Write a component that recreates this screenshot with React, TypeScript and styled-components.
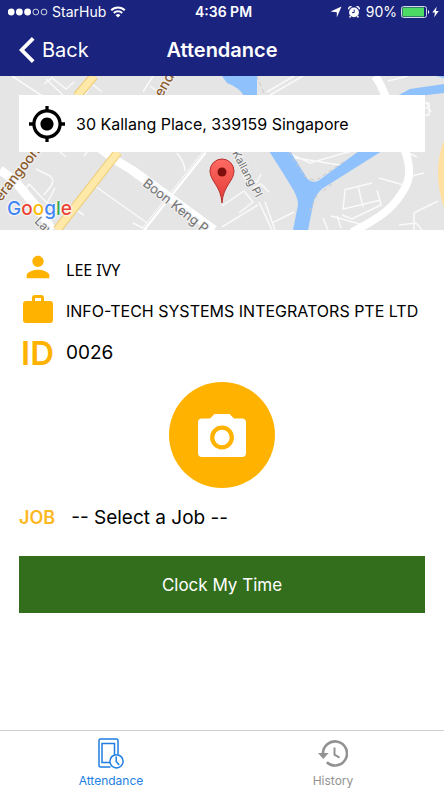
import React from "react";
import styled, { createGlobalStyle } from "styled-components";

const NAVY = "#1a237e";
const AMBER = "#ffb300";
const BLUE = "#1e7fe0";
const GREY = "#929292";

const GlobalStyle = createGlobalStyle`
  *, *::before, *::after { box-sizing: border-box; }
  body {
    margin: 0;
    background: #fff;
    color: #000;
    font-family: Inter, "Liberation Sans", sans-serif;
  }
  button, select { font-family: inherit; }
  svg { display: block; flex: none; }
`;

const Screen = styled.div`
  display: flex;
  flex-direction: column;
  min-height: 100vh;
`;

const TopBar = styled.header`
  background: ${NAVY};
  color: #fff;
`;

const StatusBar = styled.div`
  display: grid;
  grid-template-columns: 1fr auto 1fr;
  align-items: center;
  height: 24px;
  padding: 0 5px 0 8px;
  font-size: 14px;
  line-height: 16px;
`;

const StatusGroup = styled.div<{ $end?: boolean }>`
  display: flex;
  align-items: center;
  justify-content: ${(p) => (p.$end ? "flex-end" : "flex-start")};
  gap: 4px;
`;

const StatusIcons = styled.span`
  display: flex;
  gap: 6px;
  margin-right: 2px;
`;

const PowerIcons = styled.span`
  display: flex;
  gap: 2px;
`;

const Time = styled.span`
  font-weight: 600;
`;

const NavRow = styled.div`
  display: grid;
  grid-template-columns: 1fr auto 1fr;
  align-items: center;
  height: 52px;
  padding: 0 19px;
`;

const BackButton = styled.button`
  display: flex;
  align-items: center;
  justify-self: start;
  gap: 7px;
  padding: 0;
  border: 0;
  background: none;
  color: #fff;
  font-size: 20px;
  line-height: 26px;
`;

const Title = styled.h1`
  margin: 0;
  font-size: 20px;
  line-height: 26px;
  font-weight: 600;
`;

const MapPanel = styled.section`
  position: relative;
  height: 154px;
  padding: 19px;
  overflow: hidden;
  background: #e5e5e5;
`;

const MapArt = styled.svg`
  position: absolute;
  inset: 0;
  width: 100%;
  height: 100%;
`;

const AddressCard = styled.div`
  position: relative;
  display: flex;
  align-items: center;
  gap: 11px;
  height: 57px;
  padding: 0 10px;
  background: #fff;
  font-size: 16px;
  line-height: 20px;
`;

const MapLogo = styled.div`
  position: absolute;
  left: 7px;
  bottom: 7px;
  font-size: 19px;
  line-height: 28px;
  font-weight: 500;
  text-shadow: 0 0 2px #fff, 0 0 2px #fff, 0 0 3px #fff;
`;

const Letter = styled.span<{ $color: string }>`
  color: ${(p) => p.$color};
`;

const Main = styled.main`
  flex: 1;
  display: flex;
  flex-direction: column;
  padding: 18px 19px;
`;

const Row = styled.div`
  display: flex;
  align-items: center;
  gap: 10px;
  height: 42px;
`;

const IconSlot = styled.div`
  display: flex;
  justify-content: center;
  width: 37px;
  padding-bottom: 4px;
  color: ${AMBER};
`;

const IdMark = styled.span`
  padding-top: 4px;
  font-size: 33px;
  line-height: 40px;
  font-weight: 600;
`;

const NameText = styled.span`
  padding-top: 2px;
  font-family: "Noto Sans", "Open Sans", sans-serif;
  font-size: 16px;
  line-height: 20px;
`;

const CompanyText = styled.span`
  font-size: 16px;
  line-height: 20px;
  white-space: nowrap;
`;

const IdText = styled.span`
  font-size: 19px;
  line-height: 26px;
`;

const CameraButton = styled.button`
  display: flex;
  align-items: center;
  justify-content: center;
  align-self: center;
  width: 106px;
  height: 106px;
  margin: 8px 0;
  padding: 0;
  border: 0;
  border-radius: 50%;
  background: ${AMBER};
  color: #fff;
`;

const JobRow = styled.label`
  display: flex;
  align-items: center;
  gap: 16px;
  height: 44px;
`;

const JobMark = styled.span`
  color: #fcb823;
  font-size: 18px;
  line-height: 26px;
  font-weight: 600;
`;

const JobSelect = styled.select`
  flex: 1;
  appearance: none;
  padding: 0;
  border: 0;
  background: none;
  color: #000;
  font-size: 19px;
  line-height: 26px;
`;

const ClockButton = styled.button`
  height: 57px;
  margin-top: 16px;
  border: 0;
  background: #336e1d;
  color: #fff;
  font-size: 17px;
  line-height: 22px;
`;

const TabBar = styled.nav`
  display: grid;
  grid-template-columns: 1fr 1fr;
  height: 59px;
  border-top: 1px solid #cfcfcf;
  background: #fff;
`;

const Tab = styled.a<{ $active?: boolean }>`
  display: flex;
  flex-direction: column;
  align-items: center;
  gap: 4px;
  padding-top: 7px;
  color: ${(p) => (p.$active ? BLUE : GREY)};
  font-size: 12px;
  line-height: 16px;
  text-decoration: none;
`;

const SignalDots = () => (
  <svg width="40" height="10" viewBox="0 0 40 10" fill="#fff" aria-hidden="true">
    <circle cx="3.2" cy="5" r="3.4" />
    <circle cx="11.4" cy="5" r="3.4" />
    <circle cx="19.6" cy="5" r="3.4" />
    <circle cx="27.8" cy="5" r="2.9" fill="none" stroke="#fff" strokeWidth=".8" />
    <circle cx="36" cy="5" r="2.9" fill="none" stroke="#fff" strokeWidth=".8" />
  </svg>
);

const WifiIcon = () => (
  <svg width="16" height="12" viewBox="0 0 16 12" fill="none" stroke="#fff" strokeWidth="2" aria-hidden="true">
    <path d="M1.2 4.2a9.6 9.6 0 0 1 13.6 0M3.8 7a6 6 0 0 1 8.4 0" />
    <path d="M8 11.6 5.6 9.2a3.4 3.4 0 0 1 4.8 0z" fill="#fff" stroke="none" />
  </svg>
);

const LocationIcon = () => (
  <svg width="12" height="12" viewBox="0 0 12 12" fill="#fff" aria-hidden="true">
    <path d="M11.5.5 6.8 11.5V6.2L.5 5.6z" />
  </svg>
);

const AlarmIcon = () => (
  <svg width="12" height="12" viewBox="0 0 12 12" aria-hidden="true">
    <path d="M.5 3.4A3 3 0 0 1 3.6.6M11.5 3.4A3 3 0 0 0 8.4.6M2.6 10l-1 1.5M9.4 10l1 1.5" stroke="#fff" strokeWidth="1.4" fill="none" />
    <circle cx="6" cy="6.4" r="4.9" fill="#fff" />
    <path d="M6.2 3.6v3H4" stroke={NAVY} strokeWidth="1" fill="none" />
  </svg>
);

const BatteryIcon = () => (
  <svg width="29" height="12" viewBox="0 0 29 12" aria-hidden="true">
    <rect x=".5" y=".5" width="25" height="11" rx="2" fill="none" stroke="#d6d8ea" />
    <path d="M1.5 1.5H23v9H1.5z" fill="#4cd964" />
    <path d="M27 4c1.6.5 1.6 3.5 0 4z" fill="#fff" />
  </svg>
);

const BoltIcon = () => (
  <svg width="7" height="12" viewBox="0 0 7 12" fill="#fff" aria-hidden="true">
    <path d="M4.6.8.3 6.6h2.6L2.2 11.2 6.8 5H4z" />
  </svg>
);

const ChevronIcon = () => (
  <svg width="16" height="26" viewBox="0 0 16 26" fill="none" stroke="#fff" strokeWidth="3.8" aria-hidden="true">
    <path d="M14.2 1.4 2.6 13l11.6 11.6" />
  </svg>
);

const TargetIcon = () => (
  <svg width="36" height="36" viewBox="1 1 22 22" aria-hidden="true">
    <path d="M12 8c-2.21 0-4 1.79-4 4s1.79 4 4 4 4-1.79 4-4-1.79-4-4-4zm8.94 3A8.994 8.994 0 0 0 13 3.06V1h-2v2.06A8.994 8.994 0 0 0 3.06 11H1v2h2.06A8.994 8.994 0 0 0 11 20.94V23h2v-2.06A8.994 8.994 0 0 0 20.94 13H23v-2h-2.06zM12 19c-3.87 0-7-3.13-7-7s3.13-7 7-7 7 3.13 7 7-3.13 7-7 7z" />
  </svg>
);

const PersonIcon = () => (
  <svg width="34" height="34" viewBox="0 0 24 24" fill="currentColor" aria-hidden="true">
    <path d="M12 12c2.21 0 4-1.79 4-4s-1.79-4-4-4-4 1.79-4 4 1.79 4 4 4zm0 2c-2.67 0-8 1.34-8 4v2h16v-2c0-2.66-5.33-4-8-4z" />
  </svg>
);

const BriefcaseIcon = () => (
  <svg width="30" height="28" viewBox="0 0 30 28" aria-hidden="true">
    <path fill="currentColor" fillRule="evenodd" d="M12 0h6a3 3 0 0 1 3 3v3h6a3 3 0 0 1 3 3v16a3 3 0 0 1-3 3H3a3 3 0 0 1-3-3V9a3 3 0 0 1 3-3h6V3a3 3 0 0 1 3-3zm0 3v3h6V3z" />
  </svg>
);

const CameraIcon = () => (
  <svg width="48" height="43" viewBox="0 0 48 43" aria-hidden="true">
    <path fill="currentColor" d="M16.5 0h15l4.5 4.6h8a4 4 0 0 1 4 4V39a4 4 0 0 1-4 4H4a4 4 0 0 1-4-4V8.600a4 4 0 0 1 4-4h8z" />
    <circle cx="24" cy="23.5" r="9.8" fill="none" stroke={AMBER} strokeWidth="4.200" />
  </svg>
);

const AttendanceIcon = () => (
  <svg width="26" height="31" viewBox="0 0 26 31" fill="none" stroke="currentColor" strokeWidth="1.500" aria-hidden="true">
    <path d="M12.500 29H2.500a1.500 1.500 0 0 1-1.500-1.500V2.500A1.500 1.500 0 0 1 2.500 1h16A1.500 1.500 0 0 1 20 2.500v14" />
    <path d="M12.500 24.500H4V5.500h12.500v11.200" />
    <circle cx="18.500" cy="23.300" r="6.600" fill="#fff" />
    <path d="M18.200 18.500v5l3 3.500" />
  </svg>
);

const HistoryIcon = () => (
  <svg width="30" height="31" viewBox="0 0 30 31" fill="none" stroke="currentColor" aria-hidden="true">
    <path d="M5 16a12 12 0 1 1 3.800 8.200" strokeWidth="2.600" />
    <path d="M0 15h10.600l-5.300 6z" fill="currentColor" stroke="none" />
    <path d="M16.500 9.500v7.200l5 3" strokeWidth="2" />
  </svg>
);

const CityMap = () => (
  <MapArt viewBox="0 0 444 154" preserveAspectRatio="xMidYMid slice" role="img" aria-label="Map of Kallang Place">
    <defs>
      <linearGradient id="pin" x1="0" y1="0" x2="0" y2="1">
        <stop offset="0" stopColor="#ff6b63" />
        <stop offset="1" stopColor="#e03a34" />
      </linearGradient>
    </defs>
    <rect width="444" height="154" fill="#e5e5e5" />
    <g fill="none" stroke="#fafafa" strokeWidth="1.500">
      <path d="M12 0l32 21M44 8l8-6 14 11 8-7M82 23l10-15 10 8M143 16l10-16M150 10l14 10M46 3l18 17" />
      <path d="M29 108l18 19 8-15M36 93l14 7q5 4 1 10l-7 9M60 76l6 5M90 72l-6 8M29 108l-4 6" />
      <path d="M95 110l52 37M76 134l8 5M177 77q8 10 8 18M133 147l14 7" />
      <path d="M267 16l27-16M270 19l33-19M388 5l20-5M381 19l27 5" />
      <path d="M288 77l22 10 45-13M290 81l56 9M222 130l22-15 9 11-14 11M243 101l14 5 4-8M253 112l8-4 8 8" />
      <path d="M259 126l13 28M265 126l10 28M222 151l36-22M272 147l22-11" />
      <path d="M344 114l28-7M345 115l-2 18 38-9M358 110l5 21M377 114l4 15-29 14-10-4M331 140l36 10M323 142l5 12M379 102l28 8M337 140l4 12" />
      <path d="M414 154v-17l24-12M399 149l17-2 6 7M411 54h12M421 27h8v12h-10M426 26l5 10M420 32h9M412 100l12-3M404 75l13 6" />
    </g>
    <g fill="none" strokeLinejoin="round">
      <path d="M205 76l-62 78" stroke="#fff" strokeWidth="4" />
      <path d="M204 76l-62 78" stroke="#dedede" strokeWidth="1" />
      <path d="M97 70l20 15 15 9 82 60" stroke="#fff" strokeWidth="9" />
      <path d="M0 94l14 10 25 30 13 20" stroke="#fff" strokeWidth="9" />
      <path d="M375 0q10 13 16 40c5 18 26 47 15 70-11 21-24 31-54 46" stroke="#fff" strokeWidth="8" />
      <path d="M94 0L77 20M118 76L57 154" stroke="#eecb73" strokeWidth="9" />
      <path d="M94 0L77 20M118 76L57 154" stroke="#ffe9a8" strokeWidth="7" />
      <path d="M448 65q-12 30 0 66" stroke="#ffe0a0" strokeWidth="8" />
    </g>
    <g fill="#8fc1fc">
      <path d="M222 0h35v20h-13q-4-8-17-13z" />
      <path d="M397 20l13-7 34-5v9l-17 2-10 2zM436 0h8v2z" />
      <path d="M269 75h21l15 24q4 9 13 6l41-30h23l-54 34q-10 5-14 15l-6 30h-15l5-25q0-6-4-14l-11-18z" />
    </g>
    <path d="M257 0l8 20M289 76l15 24q6 5 14 3l27-18M317 119l-9 20M332 108l-10 8" fill="none" stroke="#c9c9c9" strokeWidth="1" strokeDasharray="4 3" />
    <g fontFamily="Inter, sans-serif" stroke="#f1f1f1" strokeWidth="2" paintOrder="stroke" fill="#707070">
      <text transform="translate(142 109) rotate(38)" fontSize="13">Boon Keng P</text>
      <text transform="translate(232 77) rotate(62)" fontSize="11">Kallang Pl</text>
      <text transform="translate(34 146) rotate(45)" fontSize="12">Lav</text>
      <g fill="#8b5a2b" fontSize="14" fontWeight="500">
        <text transform="translate(1 126) rotate(-52)">erangoon</text>
        <text transform="translate(162 22) rotate(-60)">ende</text>
      </g>
    </g>
    <path d="M222 127c-1-17-12-22-12-32a12 12 0 0 1 24 0c0 10-11 15-12 32z" fill="url(#pin)" stroke="#b72e2b" />
    <circle cx="222" cy="96" r="4.500" fill="#7d100c" />
  </MapArt>
);

const LOGO: [string, string][] = [
  ["G", "#4285f4"],
  ["o", "#ea4335"],
  ["o", "#fbbc05"],
  ["g", "#4285f4"],
  ["l", "#34a853"],
  ["e", "#ea4335"],
];

export default function App() {
  return (
    <Screen>
      <GlobalStyle />
      <TopBar>
        <StatusBar>
          <StatusGroup>
            <SignalDots />
            <span>StarHub</span>
            <WifiIcon />
          </StatusGroup>
          <Time>4:36 PM</Time>
          <StatusGroup $end>
            <StatusIcons>
              <LocationIcon />
              <AlarmIcon />
            </StatusIcons>
            <span>90%</span>
            <PowerIcons>
              <BatteryIcon />
              <BoltIcon />
            </PowerIcons>
          </StatusGroup>
        </StatusBar>
        <NavRow>
          <BackButton type="button">
            <ChevronIcon />
            Back
          </BackButton>
          <Title>Attendance</Title>
        </NavRow>
      </TopBar>

      <MapPanel>
        <CityMap />
        <AddressCard>
          <TargetIcon />
          <span>30 Kallang Place, 339159 Singapore</span>
        </AddressCard>
        <MapLogo>
          {LOGO.map(([letter, color], i) => (
            <Letter key={i} $color={color}>{letter}</Letter>
          ))}
        </MapLogo>
      </MapPanel>

      <Main>
        <Row>
          <IconSlot><PersonIcon /></IconSlot>
          <NameText>LEE IVY</NameText>
        </Row>
        <Row>
          <IconSlot><BriefcaseIcon /></IconSlot>
          <CompanyText>INFO-TECH SYSTEMS INTEGRATORS PTE LTD</CompanyText>
        </Row>
        <Row>
          <IconSlot><IdMark>ID</IdMark></IconSlot>
          <IdText>0026</IdText>
        </Row>
        <CameraButton type="button" aria-label="Take photo">
          <CameraIcon />
        </CameraButton>
        <JobRow>
          <JobMark>JOB</JobMark>
          <JobSelect defaultValue="">
            <option value="">-- Select a Job --</option>
          </JobSelect>
        </JobRow>
        <ClockButton type="button">Clock My Time</ClockButton>
      </Main>

      <TabBar>
        <Tab href="#attendance" $active aria-current="page">
          <AttendanceIcon />
          Attendance
        </Tab>
        <Tab href="#history">
          <HistoryIcon />
          History
        </Tab>
      </TabBar>
    </Screen>
  );
}
